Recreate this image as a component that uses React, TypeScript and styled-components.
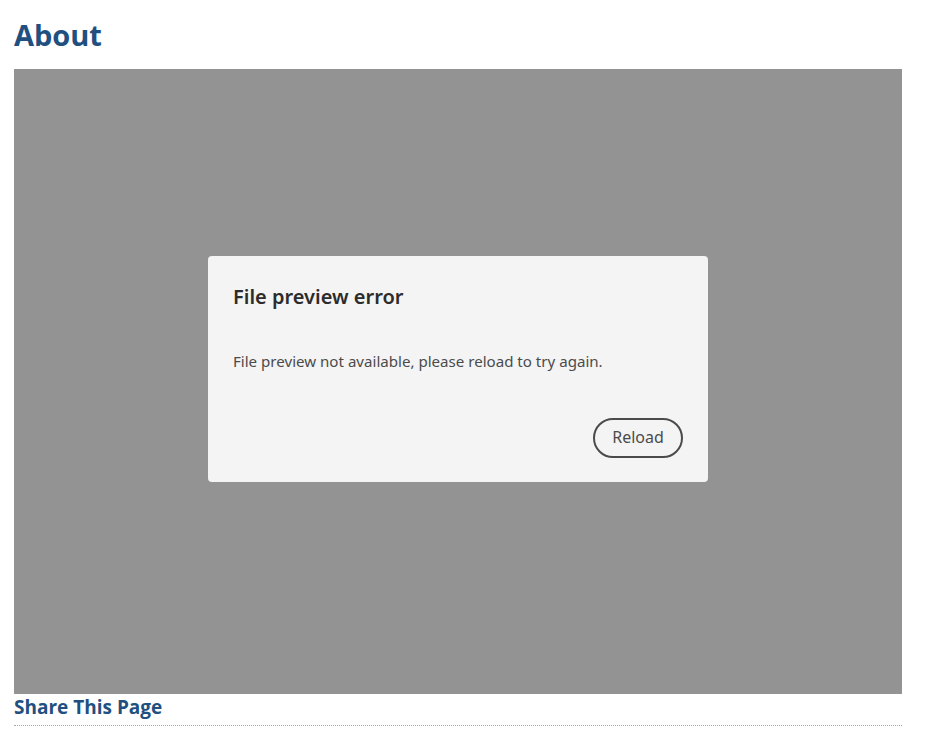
import React from "react";
import styled, { createGlobalStyle } from "styled-components";

const GlobalStyle = createGlobalStyle`
  html, body { margin: 0; padding: 0; background: #ffffff; }
  body { font-family: "Open Sans", "Noto Sans", sans-serif; }
`;

const Page = styled.div`
  padding: 14px 24px 0 14px;
  width: 888px;
`;

const Heading = styled.h1`
  margin: 0 0 14px 0;
  font-family: "Open Sans", sans-serif;
  font-size: 29px;
  line-height: 41px;
  font-weight: 700;
  color: #1f5080;
`;

const Viewer = styled.div`
  height: 625px;
  background: #939393;
  display: flex;
  flex-direction: column;
  align-items: center;
  padding-top: 187px;
  box-sizing: border-box;
`;

const Dialog = styled.div`
  width: 500px;
  height: 226px;
  box-sizing: border-box;
  background: #f4f4f4;
  border-radius: 4px;
  padding: 28px 25px 24px 25px;
  display: flex;
  flex-direction: column;
`;

const DialogTitle = styled.h2`
  margin: 0;
  font-family: "Noto Sans", sans-serif;
  font-size: 20px;
  line-height: 26px;
  font-weight: 600;
  color: #2c2c2c;
`;

const DialogBody = styled.p`
  margin: 40px 0 0 0;
  font-family: "Noto Sans", sans-serif;
  font-size: 15.1px;
  line-height: 22px;
  color: #4b4b4b;
`;

const Footer = styled.div`
  margin-top: auto;
  display: flex;
  justify-content: flex-end;
`;

const ReloadButton = styled.button`
  width: 90px;
  height: 40px;
  border: 2px solid #4b4b4b;
  border-radius: 20px;
  background: transparent;
  font-family: "Noto Sans", sans-serif;
  font-size: 16px;
  color: #4b4b4b;
  padding: 0 0 2px 0;
  cursor: pointer;
`;

const ShareTitle = styled.h3`
  margin: 0;
  font-family: "Open Sans", sans-serif;
  font-size: 19px;
  line-height: 27px;
  font-weight: 700;
  color: #1f5080;
`;

const Divider = styled.div`
  margin-top: 4px;
  border-top: 1px dotted #a8a8a8;
`;

export default function App() {
  return (
    <>
      <GlobalStyle />
      <Page>
        <Heading>About</Heading>
        <Viewer>
          <Dialog>
            <DialogTitle>File preview error</DialogTitle>
            <DialogBody>File preview not available, please reload to try again.</DialogBody>
            <Footer>
              <ReloadButton>Reload</ReloadButton>
            </Footer>
          </Dialog>
        </Viewer>
        <ShareTitle>Share This Page</ShareTitle>
        <Divider />
      </Page>
    </>
  );
}
